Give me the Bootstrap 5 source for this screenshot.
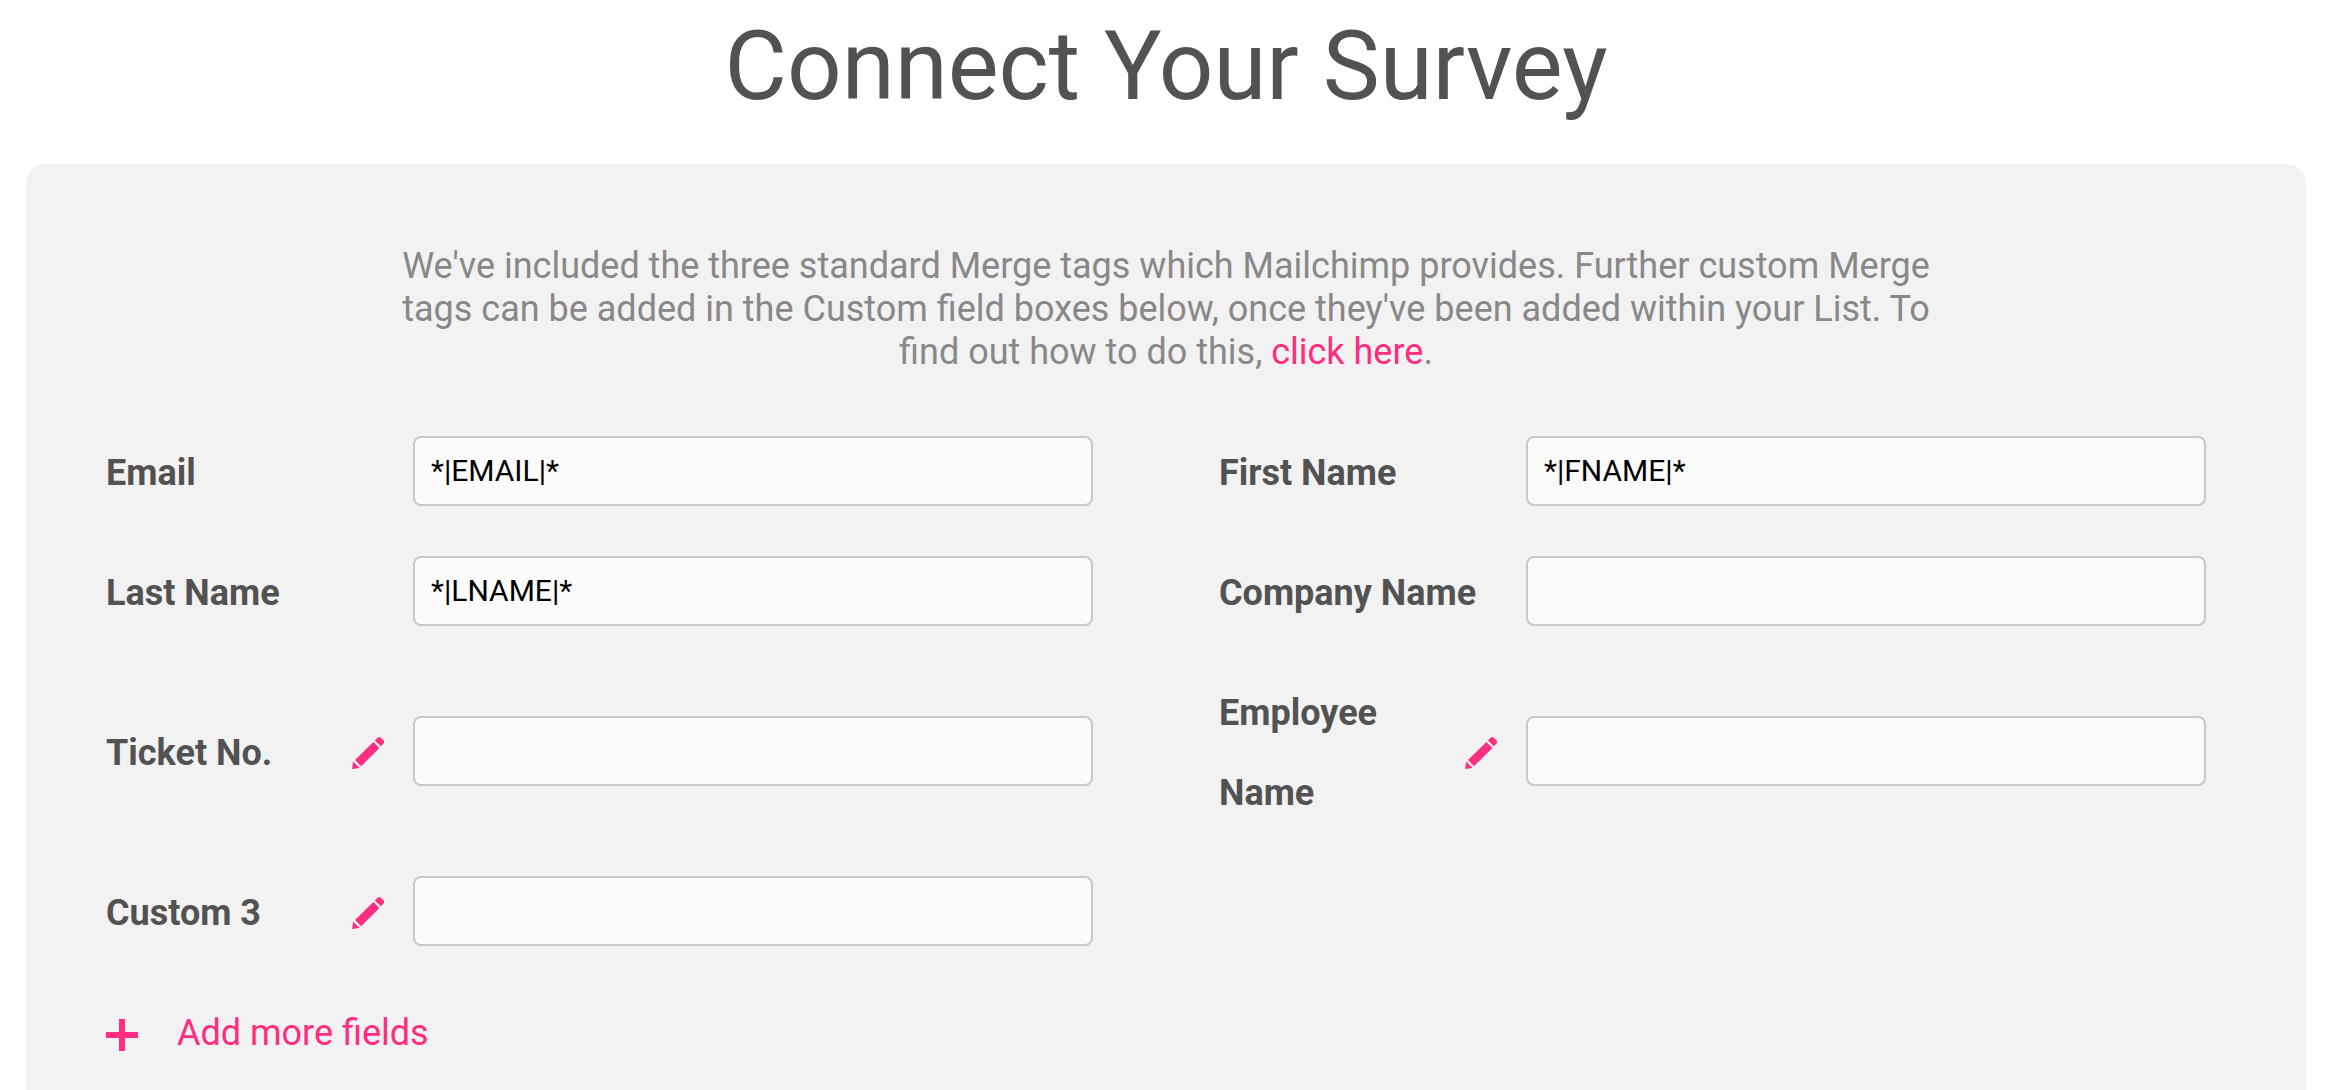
<!DOCTYPE html>
<html lang="en">
<head>
<meta charset="utf-8">
<meta name="viewport" content="width=device-width, initial-scale=1">
<title>Connect Your Survey</title>
<link href="https://cdn.jsdelivr.net/npm/bootstrap@5.3.0/dist/css/bootstrap.min.css" rel="stylesheet">
<style>
  body { font-family: Roboto, "Liberation Sans", sans-serif; font-size: 36px; color: #525252; background: #fff; }
  .page-title { font-size: 96px; line-height: 116px; padding: 8px 0 40px; }
  .panel { margin: 0 26px; padding: 81px 100px 0 80px; background: #f2f2f2; border-radius: 20px 20px 0 0; }
  .intro { max-width: 1550px; margin: 0 auto 59px; line-height: 43px; color: #888; }
  .intro-wrap { margin-right: -20px; }
  .pink, .pink:hover { color: #ff2d7f; }
  .field-grid { grid-template-columns: 1fr 1fr; gap: 40px 126px; }
  .field-label { width: 307px; line-height: 80px; }
  .field-label.editable { width: 246px; padding-right: 20px; }
  .edit-btn { width: 32px; margin-right: 29px; }
  .icon { width: 32px; height: 32px; fill: currentColor; }
  .field-input { height: 70px; margin-bottom: 4px; padding: 0 16px 2px; border: 2px solid #c8c8c8; border-radius: 8px; background: #fbfbfb; color: #000; font-size: 30px; line-height: 40px; }
  .field-input:focus { background: #fbfbfb; color: #000; }
  .add-btn { gap: 39px; margin-top: 40px; font-size: 36px; line-height: 80px; }
</style>
</head>
<body class="min-vh-100 d-flex flex-column">
<svg class="d-none" aria-hidden="true">
  <symbol id="pencil" viewBox="0 0 32 32">
    <path d="M22.900 3.400 25.300 1Q27.200-.8 29 .9L31.200 3.100Q32.900 4.900 31.200 6.800L28.800 9.300Z"/>
    <path d="M21.400 4.900 27.400 10.900 9.100 29.200 3 23.100Z"/>
    <path d="M1.200 24.500 7.600 30.900 0 32Z"/>
  </symbol>
</svg>

<h1 class="page-title fw-normal text-center mb-0">Connect Your Survey</h1>

<main class="panel flex-grow-1">
  <div class="intro-wrap">
    <p class="intro text-center">We've included the three standard Merge tags which Mailchimp provides. Further custom Merge tags can be added in the Custom field boxes below, once they've been added within your List. To find out how to do this, <a class="pink text-decoration-none" href="#">click here</a>.</p>
  </div>

  <form>
    <div class="field-grid d-grid align-items-center">
      <div class="d-flex align-items-center">
        <label class="field-label flex-shrink-0 fw-bold" for="email">Email</label>
        <input class="form-control field-input" id="email" type="text" value="*|EMAIL|*">
      </div>
      <div class="d-flex align-items-center">
        <label class="field-label flex-shrink-0 fw-bold" for="fname">First Name</label>
        <input class="form-control field-input" id="fname" type="text" value="*|FNAME|*">
      </div>
      <div class="d-flex align-items-center">
        <label class="field-label flex-shrink-0 fw-bold" for="lname">Last Name</label>
        <input class="form-control field-input" id="lname" type="text" value="*|LNAME|*">
      </div>
      <div class="d-flex align-items-center">
        <label class="field-label flex-shrink-0 fw-bold" for="company">Company Name</label>
        <input class="form-control field-input" id="company" type="text">
      </div>
      <div class="d-flex align-items-center">
        <label class="field-label editable flex-shrink-0 fw-bold" for="ticket">Ticket No.</label>
        <button class="edit-btn pink btn p-0 border-0 d-flex flex-shrink-0" type="button" aria-label="Rename Ticket No."><svg class="icon"><use href="#pencil"/></svg></button>
        <input class="form-control field-input" id="ticket" type="text">
      </div>
      <div class="d-flex align-items-center">
        <label class="field-label editable flex-shrink-0 fw-bold" for="employee">Employee Name</label>
        <button class="edit-btn pink btn p-0 border-0 d-flex flex-shrink-0" type="button" aria-label="Rename Employee Name"><svg class="icon"><use href="#pencil"/></svg></button>
        <input class="form-control field-input" id="employee" type="text">
      </div>
      <div class="d-flex align-items-center">
        <label class="field-label editable flex-shrink-0 fw-bold" for="custom3">Custom 3</label>
        <button class="edit-btn pink btn p-0 border-0 d-flex flex-shrink-0" type="button" aria-label="Rename Custom 3"><svg class="icon"><use href="#pencil"/></svg></button>
        <input class="form-control field-input" id="custom3" type="text">
      </div>
    </div>

    <button class="add-btn pink btn p-0 border-0 rounded-0 d-flex align-items-center" type="button">
      <svg class="icon mt-1" viewBox="0 0 32 32" aria-hidden="true"><path d="M13 0h6v13h13v6H19v13h-6V19H0v-6h13z"/></svg>
      <span>Add more fields</span>
    </button>
  </form>
</main>
<script src="https://cdn.jsdelivr.net/npm/bootstrap@5.3.0/dist/js/bootstrap.bundle.min.js"></script>
</body>
</html>
